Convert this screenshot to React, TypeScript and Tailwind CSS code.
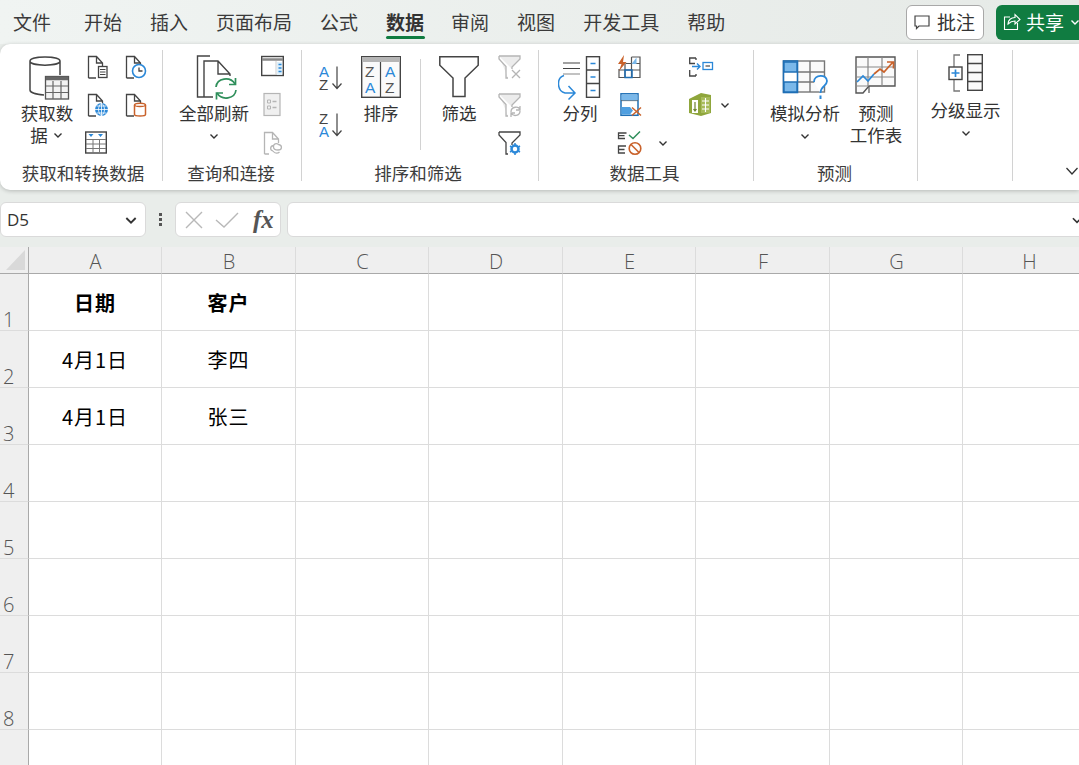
import type { ReactNode } from "react";

const ink = "#444444";
const grey = "#b5b5b5";
const blue = "#2b88d8";
const deep = "#1f6fb5";
const orange = "#c9622b";
const green = "#2f8f5b";

const tabs = ["开始", "插入", "页面布局", "公式", "数据", "审阅", "视图", "开发工具", "帮助"];
const columns = ["A", "B", "C", "D", "E", "F", "G", "H"];
const rows = [1, 2, 3, 4, 5, 6, 7, 8, 9];
const cells: Record<string, string> = {
  A1: "日期",
  B1: "客户",
  A2: "4月1日",
  B2: "李四",
  A3: "4月1日",
  B3: "张三",
};

function Chevron({ size = 12, color = "#333" }: { size?: number; color?: string }) {
  return (
    <svg width={size} height={size} viewBox="0 0 12 12" fill="none" className="shrink-0">
      <path d="M2.5 4.5 6 8l3.5-3.5" stroke={color} strokeWidth="1.4" />
    </svg>
  );
}

// 작은 리본 아이콘 공통 틀
function Small({ children }: { children: ReactNode }) {
  return (
    <svg width="24" height="24" viewBox="0 0 24 24" fill="none" className="shrink-0 overflow-visible">
      {children}
    </svg>
  );
}

function Page({ color = ink }: { color?: string }) {
  return (
    <path
      d="M3.5 23V1.5h8l6 6.5v3M11.5 1.5V8h6M3.5 23H11"
      stroke={color}
      strokeWidth="1.3"
      fill="none"
    />
  );
}

function IconDocTable() {
  return (
    <Small>
      <Page />
      <rect x="13.5" y="11.5" width="8.5" height="11" fill="#fff" stroke={ink} strokeWidth="1.3" />
      <path d="M15 14.5h5.500M15 17h5.500M15 19.500h5.500" stroke={ink} />
    </Small>
  );
}

function IconDocClock() {
  return (
    <Small>
      <Page />
      <circle cx="16" cy="16" r="6.5" fill="#fff" stroke={blue} strokeWidth="1.6" />
      <path d="M16 12.500V16h3.500" stroke={ink} strokeWidth="1.3" />
    </Small>
  );
}

function IconDocGlobe() {
  return (
    <Small>
      <Page />
      <circle cx="16.500" cy="16.500" r="6.500" fill={blue} />
      <path d="M10 16.500h13M16.500 10v13M11.500 13h10M11.500 20h10M16.500 10c-4 4-4 9 0 13M16.500 10c4 4 4 9 0 13" stroke="#fff" strokeWidth="0.8" />
    </Small>
  );
}

function IconDocCylinder() {
  return (
    <Small>
      <Page />
      <path d="M11.500 12c0-2.500 11-2.500 11 0v9.500c0 2-11 2-11 0z" fill="#fff" stroke={orange} strokeWidth="1.5" />
      <path d="M11.500 12c0 2 11 2 11 0" stroke={orange} strokeWidth="1.300" />
    </Small>
  );
}

function IconTableFilter() {
  return (
    <Small>
      <rect x="0.7" y="1" width="20.600" height="21" fill="#fff" stroke={ink} strokeWidth="1.4" />
      <path d="M1 8.500h20M1 13h20M1 17.500h20M8 8.500V22M14.500 8.500V22" stroke="#777" />
      <path d="M3.500 3h5L6 6zM13 3h5l-2.500 3z" fill={blue} />
    </Small>
  );
}

function IconPanel() {
  return (
    <Small>
      <rect x="0.700" y="1.500" width="21.600" height="19" fill="#fff" stroke={ink} strokeWidth="1.4" />
      <path d="M1 4.500h21" stroke="#888" strokeWidth="2.500" />
      <path d="M15 6v14" stroke="#ccc" />
      <path d="M16 7h5v13h-5z" fill="#dff0fb" />
      <path d="M17.500 9.500h3M17.500 13h3M17.500 16.500h3" stroke={blue} strokeWidth="1.600" />
    </Small>
  );
}

function IconGreyList() {
  return (
    <Small>
      <rect x="3" y="0.500" width="16" height="22" fill="#f0f0f0" stroke={grey} strokeWidth="1.200" />
      <path d="M6.500 7h3v3h-3zM6.500 13h3v3h-3z" stroke={grey} />
      <path d="M11.500 8.500h4M11.500 14.500h4" stroke={grey} strokeWidth="1.300" />
    </Small>
  );
}

function IconGreyLink() {
  return (
    <Small>
      <path d="M3.500 23V1.500h8l6 6.500v4M11.500 1.500V8h6M3.500 23H8" stroke={grey} strokeWidth="1.300" />
      <path d="M13 14.500c-4 0-4.500 4.500-1 5.500M17 19c4.500 0 4.500-5 .5-5.500-2-2-5.500-.5-5 2.500 0 2 2 3 4.500 3z" stroke={grey} strokeWidth="1.300" />
      <path d="M12 20c2 3 5 2.500 6.500 1" stroke={grey} strokeWidth="1.300" />
    </Small>
  );
}

function SortLetters({ top, bottom, letterTop, letterBottom }: { top: string; bottom: string; letterTop: string; letterBottom: string }) {
  return (
    <Small>
      <text x="0" y="11" fontSize="15" fontFamily="Liberation Sans, sans-serif" fill={top}>{letterTop}</text>
      <text x="0" y="24" fontSize="15" fontFamily="Liberation Sans, sans-serif" fill={bottom}>{letterBottom}</text>
      <path d="M18 0.500V22.500M13.500 17.500l4.500 5 4.500-5" stroke={ink} strokeWidth="1.200" />
    </Small>
  );
}

function IconFilterSmall({ color, children }: { color: string; children?: ReactNode }) {
  return (
    <Small>
      <path d="M1 1h21v3l-8 8v2M1 1v3l7 7.500V23h2" stroke={color} strokeWidth="1.300" fill={color === grey ? "#ececec" : "#fff"} />
      {children}
    </Small>
  );
}

function IconFlashFill() {
  return (
    <Small>
      <path d="M7 22.500V8M13.500 2h8.500v20.500H1V14M13.500 2v20.500M1 15h21M8 8.500h14" stroke="#555" strokeWidth="1.200" />
      <path d="M7 15h7v7.500H7z" stroke={deep} strokeWidth="1.500" />
      <path d="M13.500 9l5-6.500V9z" fill="#7ab8ea" />
      <path d="M6 0 0 9h3.500L1 16l7.500-9H5z" fill={orange} />
    </Small>
  );
}

function IconRemoveDup() {
  return (
    <Small>
      <rect x="3" y="0.800" width="17" height="21.500" fill="#fff" stroke={deep} strokeWidth="1.500" />
      <path d="M3 7.500h17" stroke="#555" strokeWidth="1.200" />
      <path d="M3.500 1.500h16v6h-16z" fill="#7ab8ea" />
      <path d="M3.500 14h8.500l3 3.500-3 4h-8.500z" fill="#4f9fe0" />
      <path d="M14 14.500l9 8M23 14.500l-9 8" stroke={orange} strokeWidth="1.500" />
    </Small>
  );
}

function IconValidate() {
  return (
    <Small>
      <path d="M8.500 2h-8v5.500H7M.5 4.700h6M8 15H.5v7H7M.5 18.500h6" stroke={ink} strokeWidth="1.300" />
      <path d="M11 4l4 3.500 7-7" stroke={green} strokeWidth="1.500" />
      <circle cx="17" cy="17.500" r="5.800" fill="#fff" stroke={orange} strokeWidth="1.600" />
      <path d="M13 13.500l8 8" stroke={orange} strokeWidth="1.600" />
    </Small>
  );
}

function IconConsolidate() {
  return (
    <Small>
      <path d="M7 3H.7v5.500H6M.7 15v6H7" stroke={ink} strokeWidth="1.300" />
      <path d="M.7 13h0M7 21v-2M7 3v2" stroke={ink} strokeWidth="1.300" />
      <path d="M3 11.500h8M8 8.500l3 3-3 3" stroke={blue} strokeWidth="1.400" />
      <rect x="14" y="7.500" width="9.500" height="7" stroke={blue} strokeWidth="1.300" />
      <path d="M16.500 11h4.500" stroke={ink} strokeWidth="1.200" />
    </Small>
  );
}

function IconModel() {
  return (
    <Small>
      <path d="M0 6l12-6 10 2v18l-10 3-12-3z" fill="#8fa63c" />
      <path d="M12 4h9v16h-9z" fill="#a7bb5a" />
      <path d="M3 7h6v13h-6z" fill="#fff" />
      <path d="M6 9v9M4.500 16l1.500 2 1.500-2" stroke="#6d8230" strokeWidth="1.200" />
      <path d="M13 8h7M13 12h7M13 16h7M16.500 5v14" stroke="#fff" strokeWidth="1.100" />
    </Small>
  );
}

function IconGetData() {
  return (
    <svg width="46" height="48" viewBox="0 0 46 48" fill="none">
      <path d="M6 7v29c0 2.500 6 4.500 14 5M36 7v14M6 7c0-5.500 30-5.500 30 0s-30 5.500-30 0z" stroke={ink} strokeWidth="1.500" />
      <rect x="21.500" y="22.500" width="23" height="22.500" fill="#f3f3f3" stroke="#555" strokeWidth="1.300" />
      <path d="M22 24.500h22" stroke="#666" strokeWidth="3.500" />
      <path d="M22 32h22M22 38.500h22M29 27v18M37 27v18" stroke="#666" strokeWidth="1.200" />
    </svg>
  );
}

function IconRefresh() {
  return (
    <svg width="46" height="48" viewBox="0 0 46 48" fill="none">
      <path d="M19 2H6.500v41H13" stroke={ink} strokeWidth="1.400" />
      <path d="M13 43V7h14l12 13v2M27 7v13h12M13 43h9" stroke={ink} strokeWidth="1.400" />
      <circle cx="35" cy="34.500" r="12" fill="#fff" />
      <path d="M25 33c1-9 14-11 19-3M45 36c-1 9-14 11-19 3" stroke={green} strokeWidth="1.700" />
      <path d="M44.500 24v6.500H38M25.500 45.500V39H32" stroke={green} strokeWidth="1.700" />
    </svg>
  );
}

function IconSort() {
  return (
    <svg width="40" height="44" viewBox="0 0 40 44" fill="none">
      <rect x="0.700" y="0.700" width="38.600" height="40.600" fill="#fafafa" stroke={ink} strokeWidth="1.400" />
      <path d="M1 1h38v5H1z" fill="#b5b5b5" />
      <path d="M19.500 6v35" stroke={ink} strokeWidth="1.200" />
      <text x="4" y="21" fontSize="15.500" fontFamily="Liberation Sans, sans-serif" fill="#555">Z</text>
      <text x="4" y="37" fontSize="15.500" fontFamily="Liberation Sans, sans-serif" fill={blue}>A</text>
      <text x="24" y="21" fontSize="15.500" fontFamily="Liberation Sans, sans-serif" fill={blue}>A</text>
      <text x="24" y="37" fontSize="15.500" fontFamily="Liberation Sans, sans-serif" fill="#555">Z</text>
    </svg>
  );
}

function IconFilterBig() {
  return (
    <svg width="40" height="44" viewBox="0 0 40 44" fill="none">
      <path d="M0.800 0.800h38.400v8.500L26 22v18.500H14V22L0.800 9.300z" fill="#fff" stroke={ink} strokeWidth="1.500" />
    </svg>
  );
}

function IconSplit() {
  return (
    <svg width="44" height="48" viewBox="0 0 44 48" fill="none">
      <path d="M5 7h17M5 12.500h17" stroke={ink} strokeWidth="1.200" />
      <path d="M5 18h17" stroke="#999" strokeWidth="1.200" />
      <rect x="28.500" y="0.700" width="13" height="40.600" fill="#fff" stroke={ink} strokeWidth="1.400" />
      <path d="M29 14h12M29 27.500h12" stroke={ink} strokeWidth="1.400" />
      <path d="M32.500 7.500h5M32.500 21h5M32.500 34.500h5" stroke={blue} strokeWidth="1.500" />
      <path d="M6 19.500C-2 22-1 35 7 37h9.500M10.500 30l6.500 7-6.500 6.500" stroke={blue} strokeWidth="1.500" />
    </svg>
  );
}

function IconWhatIf() {
  return (
    <svg width="46" height="48" viewBox="0 0 46 48" fill="none">
      <rect x="1.500" y="7" width="41" height="31" fill="#fafafa" stroke="#777" strokeWidth="1.400" />
      <path d="M15 18h27M15 28h27M28 7v31" stroke="#777" strokeWidth="1.400" />
      <rect x="1.500" y="7" width="14" height="31.500" fill="#fff" stroke={deep} strokeWidth="1.600" />
      <path d="M2 8h13v10H2zM2 28h13v10H2z" fill="#7ab8ea" stroke={deep} strokeWidth="1.400" />
      <path d="M32 28c0-8 13-8 13-1 0 5-6.500 5-6.500 12" fill="#fff" stroke={blue} strokeWidth="1.800" />
      <path d="M38.500 41.500v3.500" stroke={blue} strokeWidth="2" />
    </svg>
  );
}

function IconForecast() {
  return (
    <svg width="42" height="42" viewBox="0 0 42 42" fill="none">
      <path d="M1 1h39v29H14l-6 7H1z" fill="#fafafa" stroke="#555" strokeWidth="1.400" />
      <path d="M1 11h39M1 21h39M13 1v29M27 1v29M1 30h13" stroke="#888" strokeWidth="1.200" />
      <path d="M14 37v-7" stroke="#555" strokeWidth="1.200" />
      <path d="M2 26l6-6 5 5 6-7" stroke={blue} strokeWidth="1.700" />
      <path d="M19 18l6-5 4 3 9-10M32 6h6.500v6.500" stroke={orange} strokeWidth="1.700" />
    </svg>
  );
}

function IconOutline() {
  return (
    <svg width="44" height="40" viewBox="0 0 44 40" fill="none">
      <path d="M16 2H10v36h6M10 15v-2M10 28v-2" stroke="#777" strokeWidth="1.300" />
      <rect x="5" y="14" width="13" height="12.500" fill="#fff" stroke={ink} strokeWidth="1.400" />
      <path d="M7.500 20h8M11.500 16.500v7.500" stroke={blue} strokeWidth="1.700" />
      <rect x="23.700" y="1.700" width="14.600" height="35.600" fill="#fafafa" stroke={ink} strokeWidth="1.400" />
      <path d="M24 10.500h14M24 19.500h14M24 28.500h14" stroke={ink} strokeWidth="1.300" />
    </svg>
  );
}

// 리본 그룹: 내용 + 하단 라벨 + 오른쪽 구분선
function Group({ width, label, labelClass = "", children }: { width: string; label?: string; labelClass?: string; children: ReactNode }) {
  return (
    <div className={`${width} h-[131px] shrink-0 flex flex-col border-r border-[#d2d2d2]`}>
      <div className="h-[113px] flex">{children}</div>
      {label && <div className={`h-[18px] leading-[20px] text-center text-[17.5px] text-[#3c3c3c] whitespace-nowrap ${labelClass}`}>{label}</div>}
    </div>
  );
}

function Big({ width, icon, lines, chevron, iconBox = "h-[52px] pt-[4px]" }: { width: string; icon: ReactNode; lines: ReactNode[]; chevron?: boolean; iconBox?: string }) {
  return (
    <div className={`${width} shrink-0 flex flex-col items-center`}>
      <div className={`${iconBox} flex justify-center`}>{icon}</div>
      {lines.map((line, i) => (
        <div key={i} className="h-[22px] leading-[22px] text-[17.5px] text-[#333] whitespace-nowrap flex items-center gap-[4px]">
          {line}
        </div>
      ))}
      {chevron && (
        <div className="h-[24px] flex items-center">
          <Chevron />
        </div>
      )}
    </div>
  );
}

function SmallCol({ className = "", children }: { className?: string; children: ReactNode }) {
  return <div className={`flex flex-col pt-[5px] gap-[14px] shrink-0 ${className}`}>{children}</div>;
}

function Ribbon() {
  return (
    <div className="h-[146px] bg-white rounded-l-[10px] shadow-[0_1px_4px_rgba(0,0,0,0.22)] pt-[6px] flex">
      <Group width="w-[163px]" label="获取和转换数据" labelClass="pl-[4px]">
        <Big
          width="w-[64px] ml-[15px]"
          icon={<IconGetData />}
          lines={[
            "获取数",
            <>
              据
              <Chevron />
            </>,
          ]}
        />
        <SmallCol className="ml-[6px] w-[24px]">
          <IconDocTable />
          <IconDocGlobe />
          <IconTableFilter />
        </SmallCol>
        <SmallCol className="ml-[14px] w-[24px]">
          <IconDocClock />
          <IconDocCylinder />
        </SmallCol>
      </Group>
      <Group width="w-[139px]" label="查询和连接" labelClass="pr-[2px]">
        <Big width="w-[80px] ml-[11px]" icon={<IconRefresh />} lines={["全部刷新"]} chevron />
        <SmallCol className="ml-[7px] w-[24px]">
          <IconPanel />
          <IconGreyList />
          <IconGreyLink />
        </SmallCol>
      </Group>
      <Group width="w-[237px]" label="排序和筛选" labelClass="pr-[4px]">
        <div className="ml-[17px] w-[24px] shrink-0 flex flex-col pt-[16px] gap-[23px]">
          <SortLetters top={blue} bottom={ink} letterTop="A" letterBottom="Z" />
          <SortLetters top={ink} bottom={blue} letterTop="Z" letterBottom="A" />
        </div>
        <Big width="w-[40px] ml-[18px]" icon={<IconSort />} lines={["排序"]} iconBox="h-[52px] pt-[6px]" />
        <div className="ml-[19px] mt-[9px] h-[91px] w-px bg-[#d2d2d2] shrink-0" />
        <Big width="w-[40px] ml-[18px]" icon={<IconFilterBig />} lines={["筛选"]} iconBox="h-[52px] pt-[6px]" />
        <SmallCol className="ml-[19px] w-[24px]">
          <IconFilterSmall color={grey}>
            <path d="M14 15l8 8M22 15l-8 8" stroke={grey} strokeWidth="1.300" />
          </IconFilterSmall>
          <IconFilterSmall color={grey}>
            <path d="M13 19c0-6 8-6 9-2M22 18c0 5-7 6-9 2M22 13v4h-4M13 24v-4h4" stroke={grey} strokeWidth="1.300" />
          </IconFilterSmall>
          <IconFilterSmall color={ink}>
            <circle cx="17" cy="18" r="3.500" stroke={blue} strokeWidth="2.500" />
            <path d="M17 12v12M12 15l10 6M22 15l-10 6" stroke={blue} strokeWidth="1.500" strokeDasharray="2 8" />
          </IconFilterSmall>
        </SmallCol>
      </Group>
      <Group width="w-[215px]" label="数据工具" labelClass="pr-[3px]">
        <Big width="w-[44px] ml-[19px]" icon={<IconSplit />} lines={["分列"]} iconBox="h-[52px] pt-[6px]" />
        <SmallCol className="ml-[16px] w-[71px]">
          <IconFlashFill />
          <IconRemoveDup />
          <div className="flex items-center">
            <IconValidate />
            <div className="ml-[15px]">
              <Chevron />
            </div>
          </div>
        </SmallCol>
        <SmallCol className="w-[50px]">
          <IconConsolidate />
          <div className="flex items-center">
            <IconModel />
            <div className="ml-[6px]">
              <Chevron />
            </div>
          </div>
        </SmallCol>
      </Group>
      <Group width="w-[164px]" label="预测" labelClass="pr-[2px]">
        <Big width="w-[70px] ml-[16px]" icon={<IconWhatIf />} lines={["模拟分析"]} chevron />
        <Big width="w-[60px] ml-[6px]" icon={<IconForecast />} lines={["预测", "工作表"]} iconBox="h-[52px] pt-[6px]" />
      </Group>
      <Group width="w-[95px]">
        <Big width="w-[95px]" icon={<IconOutline />} lines={["分级显示"]} chevron iconBox="h-[49px] pt-[3px]" />
      </Group>
      <div className="flex-1 flex items-end justify-end pb-[15px] pr-[1px]">
        <svg width="12" height="8" viewBox="0 0 12 8" fill="none">
          <path d="M.5 1l5.500 6 5.500-6" stroke="#333" strokeWidth="1.300" />
        </svg>
      </div>
    </div>
  );
}

export default function App() {
  return (
    <div className="w-[1079px] h-[765px] overflow-hidden bg-[#e9edea] font-['Noto_Sans_CJK_SC','Noto_Sans',sans-serif]">
      {/* 상단 탭 */}
      <div className="h-[44px] flex items-center pl-[13px] bg-gradient-to-r from-[#f0f4f2] to-[#e6eae7]">
        <div className="flex items-center gap-[28px] text-[19px] leading-[28px] text-[#3a3a3a]">
          <span className="mr-[5px]">文件</span>
          {tabs.map((tab) =>
            tab === "数据" ? (
              <span key={tab} className="relative font-bold text-[#333] mr-[-1px]">
                {tab}
                <span className="absolute left-0 right-[-1px] top-[28px] h-[3px] rounded-sm bg-[#107c41]" />
              </span>
            ) : (
              <span key={tab}>{tab}</span>
            ),
          )}
        </div>
        <div className="ml-auto flex items-center gap-[12px] shrink-0 mr-[-8px]">
          <div className="w-[78px] h-[35px] pl-[7px] flex items-center gap-[7px] bg-white border border-[#a8a8a8] rounded-[6px] text-[19px] text-[#333]">
            <svg width="16" height="16" viewBox="0 0 16 16" fill="none">
              <path d="M1 2h14v10H5l-2.500 2.500V12H1z" stroke="#444" strokeWidth="1.200" />
            </svg>
            批注
          </div>
          <div className="w-[91px] h-[35px] pl-[7px] flex items-center gap-[5px] bg-[#107c41] rounded-l-[6px] text-[19px] text-white">
            <svg width="18" height="18" viewBox="0 0 18 18" fill="none">
              <path d="M7 4H1.500v12.500h13V10M5 11c0-4 3-6.500 7-6.500V1.500l5 5-5 4.500V8c-3 0-5 1-7 3z" stroke="#fff" strokeWidth="1.100" />
            </svg>
            共享
            <Chevron color="#fff" />
          </div>
        </div>
      </div>

      <Ribbon />

      {/* 수식 입력줄 */}
      <div className="mt-[12px] h-[35px] flex">
        <div className="w-[146px] shrink-0 bg-white border border-[#dadada] rounded-[6px] flex items-center pl-[6px] pr-[6px] text-[17px] text-[#333] font-['Open_Sans',sans-serif]">
          D5
          <div className="ml-auto">
            <Chevron size={16} />
          </div>
        </div>
        <div className="w-[29px] shrink-0 flex flex-col items-center justify-center gap-[2px]">
          <span className="w-[3px] h-[3px] bg-[#555]" />
          <span className="w-[3px] h-[3px] bg-[#555]" />
          <span className="w-[3px] h-[3px] bg-[#555]" />
        </div>
        <div className="w-[106px] shrink-0 bg-white border border-[#dadada] rounded-[6px] flex items-center pl-[9px] gap-[12px]">
          <svg width="18" height="18" viewBox="0 0 18 18" fill="none">
            <path d="M1 1l16 16M17 1 1 17" stroke="#b8b8b8" strokeWidth="1.400" />
          </svg>
          <svg width="24" height="18" viewBox="0 0 24 18" fill="none">
            <path d="M1 9l8 7L23 2" stroke="#b8b8b8" strokeWidth="1.400" />
          </svg>
          <span className="ml-[2px] font-['Liberation_Serif',serif] italic font-bold text-[25px] text-[#555] leading-none">fx</span>
        </div>
        <div className="w-[800px] ml-[6px] shrink-0 bg-white border border-[#dadada] rounded-[6px] flex items-center justify-end pr-[2px]">
          <Chevron size={14} />
        </div>
      </div>

      {/* 시트 격자 */}
      <div className="mt-[10px] grid grid-cols-[29px_133px_134px_133px_134px_133px_134px_133px_133px] grid-rows-[27px_repeat(9,57px)]">
        <div className="bg-[#efefef] border-r border-b border-[#a9a9a9] flex items-end justify-end pr-[3px] pb-[3px]">
          <div className="w-0 h-0 border-l-[19px] border-l-transparent border-b-[20px] border-b-[#d9d9d9]" />
        </div>
        {columns.map((col) => (
          <div
            key={col}
            className="bg-[#efefef] border-r border-[#dcdcdc] border-b-[#a9a9a9] border-b pt-[3px] pl-[1px] flex items-center justify-center text-[20px] text-[#555] font-['Open_Sans',sans-serif] font-light"
          >
            {col}
          </div>
        ))}
        {rows.map((row) => (
          <div key={row} className="contents">
            <div className="bg-[#efefef] border-r border-r-[#a9a9a9] border-b border-b-[#dcdcdc] flex items-end pl-[3px] text-[20px] leading-[21px] text-[#555] font-['Open_Sans',sans-serif] font-light">
              {row < 9 ? row : ""}
            </div>
            {columns.map((col) => {
              const text = cells[`${col}${row}`];
              return (
                <div
                  key={col}
                  className={`bg-white border-r border-b border-[#dcdcdc] pt-[1px] flex items-center justify-center text-[20px] tracking-[1px] text-black ${row === 1 ? "font-bold" : "font-normal"}`}
                >
                  {text}
                </div>
              );
            })}
          </div>
        ))}
      </div>
    </div>
  );
}
